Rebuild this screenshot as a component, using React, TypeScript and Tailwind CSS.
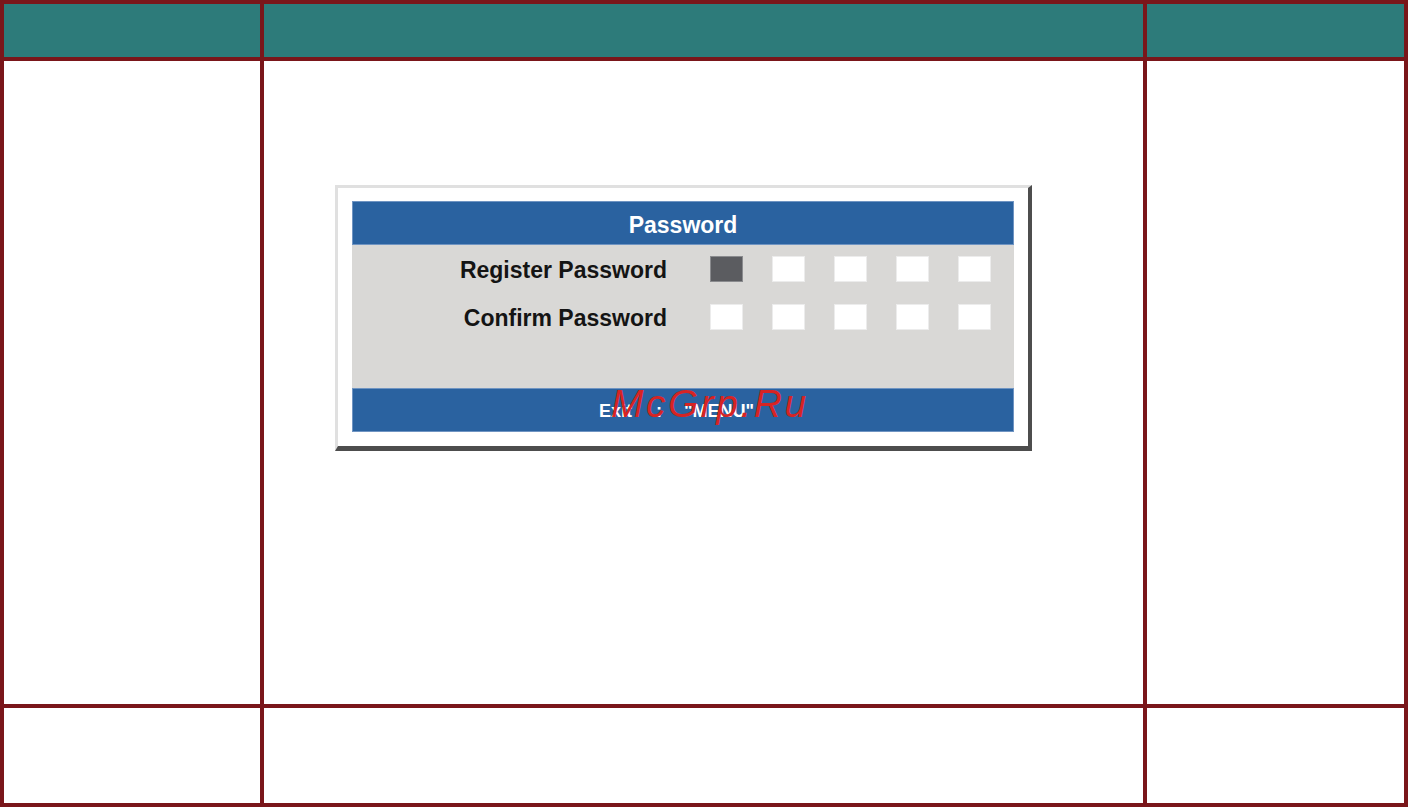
const BOXES = [0, 1, 2, 3, 4];

const ROWS = [
  { label: 'Register Password', active: 0 },
  { label: 'Confirm Password', active: -1 },
];

function PasswordPanel() {
  return (
    <div className="relative w-[697px] h-[266px] box-border bg-white border-t-[3px] border-l-[3px] border-r-[4px] border-b-[5px] border-t-[#e0e0e0] border-l-[#e0e0e0] border-r-[#4d4d4d] border-b-[#4d4d4d] pt-[13px] pl-[14px] pr-[14px] pb-[14px]">
      <div className="flex flex-col h-full font-['Liberation_Sans',Arial,sans-serif] font-bold">
        {/* title bar */}
        <div className="h-[44px] bg-[#2a62a0] border border-[#6f94c2] flex items-center justify-center pt-[5px] text-white text-[23px]">
          Password
        </div>

        {/* body */}
        <div className="h-[143px] bg-[#d9d8d6]">
          {ROWS.map((row) => (
            <div key={row.label} className="h-[48px] flex items-center">
              <div className="w-[315px] text-right text-[23px] text-[#141414] leading-none pt-[2px]">{row.label}</div>
              <div className="flex gap-[29px] ml-[43px]">
                {BOXES.map((i) => (
                  <div
                    key={i}
                    className={`w-[33px] h-[26px] border ${
                      i === row.active ? 'bg-[#5b5c60] border-[#8a8b8e]' : 'bg-white border-[#ececec]'
                    }`}
                  />
                ))}
              </div>
            </div>
          ))}
        </div>

        {/* footer bar */}
        <div className="h-[44px] bg-[#2a62a0] border border-[#6f94c2] flex items-center pl-[246px] pt-[3px] text-white text-[18px]">
          <span>Exit</span>
          <span className="ml-[24px]">:</span>
          <span className="ml-[22px]">"MENU"</span>
        </div>
      </div>

      {/* watermark */}
      <div className="absolute left-[273px] top-[196px] leading-none italic text-[39px] tracking-[2.5px] text-[#d62424] font-['Liberation_Sans',Arial,sans-serif] whitespace-nowrap">
        McGrp.Ru
      </div>
    </div>
  );
}

export default function App() {
  return (
    <div className="w-[1408px] h-[807px] bg-[#7a161a] p-[4px] box-border">
      <div className="grid grid-cols-[256px_879px_257px] grid-rows-[53px_643px_95px] gap-[4px] h-full">
        <div className="bg-[#2d7b7a]" />
        <div className="bg-[#2d7b7a]" />
        <div className="bg-[#2d7b7a]" />

        <div className="bg-white" />
        <div className="bg-white pl-[71px] pt-[124px]">
          <PasswordPanel />
        </div>
        <div className="bg-white" />

        <div className="bg-white" />
        <div className="bg-white" />
        <div className="bg-white" />
      </div>
    </div>
  );
}
